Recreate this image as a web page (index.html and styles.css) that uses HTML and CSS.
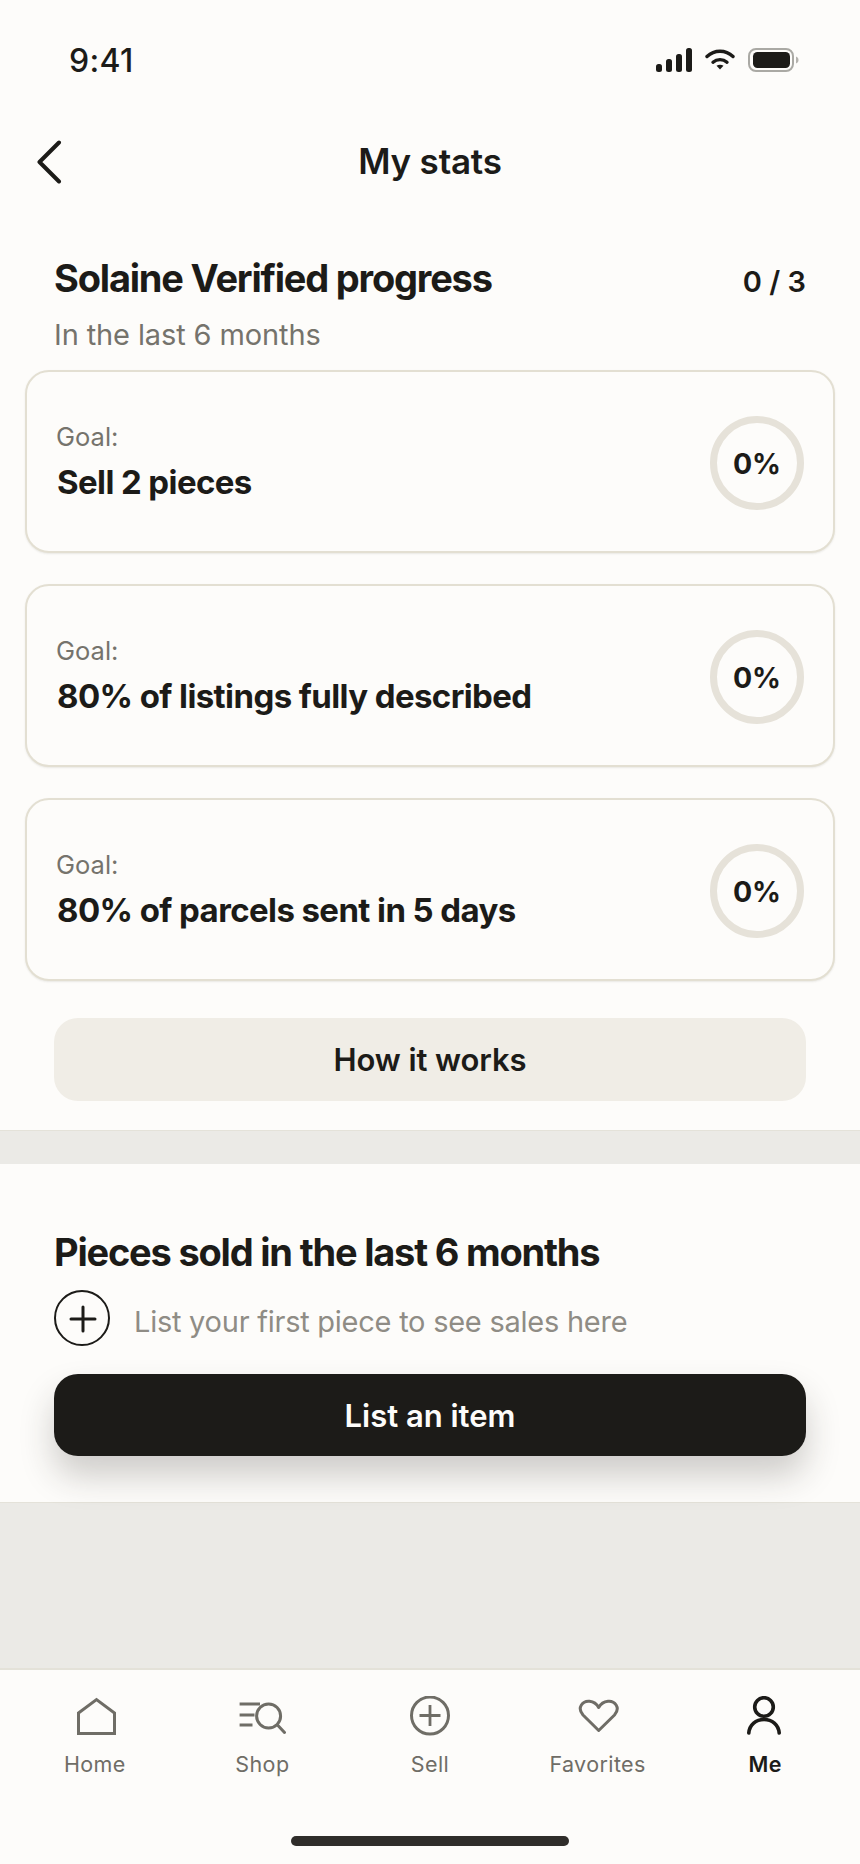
FILE: index.html
```html
<!DOCTYPE html>
<html lang="en">
<head>
<meta charset="utf-8">
<title>My stats</title>
<link rel="stylesheet" href="styles.css">
</head>
<body>
<div class="app">
  <div class="status">
    <span class="time">9:41</span>
    <div class="status-icons">
      <svg class="sig" width="36" height="24" viewBox="0 0 36 24"><rect x="0" y="16" width="6" height="8" rx="2.5"/><rect x="10" y="11" width="6" height="13" rx="2.5"/><rect x="20" y="6" width="6" height="18" rx="2.5"/><rect x="30" y="0" width="6" height="24" rx="2.5"/></svg>
      <svg class="wifi" width="30" height="22" viewBox="0 0 30 22"><path d="M2 8.500C9.500 1.500 20.500 1.500 28 8.500" fill="none" stroke="#1c1b18" stroke-width="3.400" stroke-linecap="round"/><path d="M8 14.200C12 10.800 18 10.800 22 14.200" fill="none" stroke="#1c1b18" stroke-width="3.400" stroke-linecap="round"/><path d="M11.500 17.800L15 21.500L18.500 17.800C16.500 16.300 13.500 16.300 11.500 17.800Z" fill="#1c1b18"/></svg>
      <svg class="batt" width="51" height="24" viewBox="0 0 51 24"><rect x="1" y="1" width="44" height="22" rx="7" fill="none" stroke="#aaa9a4" stroke-width="2"/><rect x="5" y="4" width="37" height="16" rx="4.500" fill="#1c1b18"/><path d="M48 8.500C50 9.500 50.500 10.500 50.500 12C50.500 13.500 50 14.500 48 15.500Z" fill="#b5b3ae"/></svg>
    </div>
  </div>

  <header class="topbar">
    <svg class="back" width="26" height="44" viewBox="0 0 26 44"><path d="M23 2.500L3.500 22L23 41.500" fill="none" stroke="#1c1b18" stroke-width="4" stroke-linecap="round" stroke-linejoin="round"/></svg>
    <h1 class="title">My stats</h1>
  </header>

  <section class="progress">
    <div class="prog-head">
      <h2 class="heading">Solaine Verified progress</h2>
      <span class="count">0 / 3</span>
    </div>
    <p class="sub">In the last 6 months</p>
    <div class="cards">
      <div class="card">
        <div class="goal-text"><div class="goal-label">Goal:</div><div class="goal-name">Sell 2 pieces</div></div>
        <div class="ring">0%</div>
      </div>
      <div class="card">
        <div class="goal-text"><div class="goal-label">Goal:</div><div class="goal-name">80% of listings fully described</div></div>
        <div class="ring">0%</div>
      </div>
      <div class="card">
        <div class="goal-text"><div class="goal-label">Goal:</div><div class="goal-name">80% of parcels sent in 5 days</div></div>
        <div class="ring">0%</div>
      </div>
    </div>
    <div class="btn btn-light">How it works</div>
  </section>

  <section class="sold">
    <h2 class="heading">Pieces sold in the last 6 months</h2>
    <div class="hint">
      <svg class="plus" width="56" height="56" viewBox="0 0 56 56"><circle cx="28" cy="28" r="27" fill="none" stroke="#1c1b18" stroke-width="2"/><path d="M29 17V41M17 29H41" fill="none" stroke="#1c1b18" stroke-width="3" stroke-linecap="round"/></svg>
      <span class="hint-text">List your first piece to see sales here</span>
    </div>
    <div class="btn btn-dark">List an item</div>
  </section>

  <div class="filler"></div>

  <nav class="nav">
    <div class="tabs">
      <div class="tab">
        <svg width="42" height="42" viewBox="0 0 42 42"><path d="M4.500 17L22.500 3.500L40.500 17V37.500H4.500Z" fill="none" stroke="currentColor" stroke-width="3"/></svg>
        <span>Home</span>
      </div>
      <div class="tab">
        <svg width="48" height="42" viewBox="0 0 48 42"><path d="M1.600 8H22M1.600 19H16.500M1.600 29H14.500" fill="none" stroke="currentColor" stroke-width="3"/><circle cx="30.600" cy="20" r="12" fill="none" stroke="currentColor" stroke-width="3"/><path d="M39.500 29L46.500 36.500" fill="none" stroke="currentColor" stroke-width="3" stroke-linecap="round"/></svg>
        <span>Shop</span>
      </div>
      <div class="tab">
        <svg width="42" height="42" viewBox="0 0 42 42"><circle cx="21" cy="19.500" r="18.500" fill="none" stroke="currentColor" stroke-width="3"/><path d="M21 9V30M10.500 19.500H31.500" fill="none" stroke="currentColor" stroke-width="2.800"/></svg>
        <span>Sell</span>
      </div>
      <div class="tab">
        <svg width="42" height="42" viewBox="0 0 42 42"><path d="M21.700 34.500L6 19C-0.500 11.500 6 4.500 12.500 5.200C16.500 5.600 19.800 8 21.700 11.500C23.600 8 27 5.600 31 5.200C37.500 4.500 44 11.500 37.500 19Z" fill="none" stroke="currentColor" stroke-width="3" stroke-linejoin="round"/></svg>
        <span>Favorites</span>
      </div>
      <div class="tab tab-on">
        <svg width="42" height="42" viewBox="0 0 42 42"><circle cx="20" cy="11" r="9.300" fill="none" stroke="currentColor" stroke-width="3.600"/><path d="M4.800 37C5.500 28.500 12 23.500 20 23.500C28 23.500 34.500 28.500 35.200 37" fill="none" stroke="currentColor" stroke-width="3.600" stroke-linecap="round"/></svg>
        <span>Me</span>
      </div>
    </div>
    <div class="home-bar"></div>
  </nav>
</div>
</body>
</html>
```
FILE: styles.css
```css
* { box-sizing: border-box; }
html, body { margin: 0; padding: 0; background: #ebeae6; }
body { font-family: Inter, "Liberation Sans", sans-serif; color: #1c1b18; }
h1, h2, p { margin: 0; }

.app { width: 860px; height: 1864px; display: flex; flex-direction: column; }

.status {
  height: 120px;
  background: #fdfcfa;
  padding: 43px 61px 0 69px;
  display: flex;
  justify-content: space-between;
  align-items: flex-start;
}
.time { font-size: 32px; line-height: 36px; font-weight: 500; letter-spacing: 0.3px; }
.status-icons { display: flex; align-items: flex-start; padding-top: 5px; }
.sig { fill: #1c1b18; margin-right: 13px; }
.wifi { margin-right: 13px; }

.topbar {
  height: 82px;
  background: #fdfcfa;
  display: flex;
  align-items: center;
  justify-content: center;
  position: relative;
}
.back { position: absolute; left: 36px; top: 20px; }
.title { font-size: 35px; line-height: 42px; font-weight: 600; letter-spacing: -0.2px; }

.progress { background: #fdfcfa; padding: 54px 25px 29px; border-bottom: 1px solid #e4e2d9; }
.prog-head { display: flex; justify-content: space-between; align-items: center; padding: 0 29px; height: 44px; }
.heading { font-size: 38px; line-height: 44px; font-weight: 700; letter-spacing: -1.2px; }
.count { font-size: 29px; font-weight: 600; letter-spacing: 0; padding-top: 6px; }
.sub { font-size: 29px; line-height: 36px; color: #75736c; padding: 0 29px; margin-top: 17px; letter-spacing: -0.12px; }

.cards { display: flex; flex-direction: column; gap: 31px; margin-top: 17px; }
.card {
  height: 183px;
  background: #fdfcfa;
  border: 2px solid #e3dfd2;
  border-radius: 24px;
  box-shadow: 0 1px 2px rgba(60, 55, 40, 0.1);
  display: flex;
  align-items: center;
  justify-content: space-between;
  padding: 0 29px;
}
.goal-label { font-size: 25.5px; line-height: 30px; color: #75736c; margin-top: 1px; }
.goal-name { font-size: 33px; line-height: 42px; font-weight: 700; letter-spacing: -0.6px; margin-top: 9px; margin-left: 1px; }
.ring {
  width: 94px;
  height: 94px;
  border-radius: 50%;
  border: 7px solid #e6e2d9;
  display: flex;
  align-items: center;
  justify-content: center;
  font-size: 28.5px;
  font-weight: 700;
  margin-top: 3px;
}

.btn {
  display: flex;
  align-items: center;
  justify-content: center;
  border-radius: 24px;
  font-size: 31px;
  font-weight: 600;
}
.btn-light { height: 83px; margin: 37px 29px 0; background: #f0ede6; letter-spacing: -0.1px; }
.btn-dark { height: 82px; margin-top: 28px; background: #1c1b18; color: #fdfcfa; box-shadow: 0 20px 34px rgba(40, 38, 30, 0.22); }

.sold {
  margin-top: 33px;
  background: #fdfcfa;
  padding: 66px 54px 46px;
  border-bottom: 1px solid #e4e2d9;
}
.hint { display: flex; align-items: center; gap: 24px; margin-top: 16px; }
.plus { flex: none; }
.hint-text { font-size: 29px; color: #8f8c85; letter-spacing: -0.25px; padding-top: 6px; }

.filler { flex: 1; }

.nav { height: 196px; background: #fdfcfa; border-top: 2px solid #e4e2d9; padding: 0 11px; position: relative; }
.tabs { display: grid; grid-template-columns: repeat(5, 1fr); padding-top: 26px; }
.tab { display: flex; flex-direction: column; align-items: center; color: #6f6d66; font-size: 21.5px; line-height: 26px; letter-spacing: 0.4px; }
.tab span { margin-top: 13px; }
.tab-on { color: #1c1b18; font-weight: 600; }
.home-bar { position: absolute; left: 291px; bottom: 18px; width: 278px; height: 10px; border-radius: 5px; background: #2f2d2a; }
```
